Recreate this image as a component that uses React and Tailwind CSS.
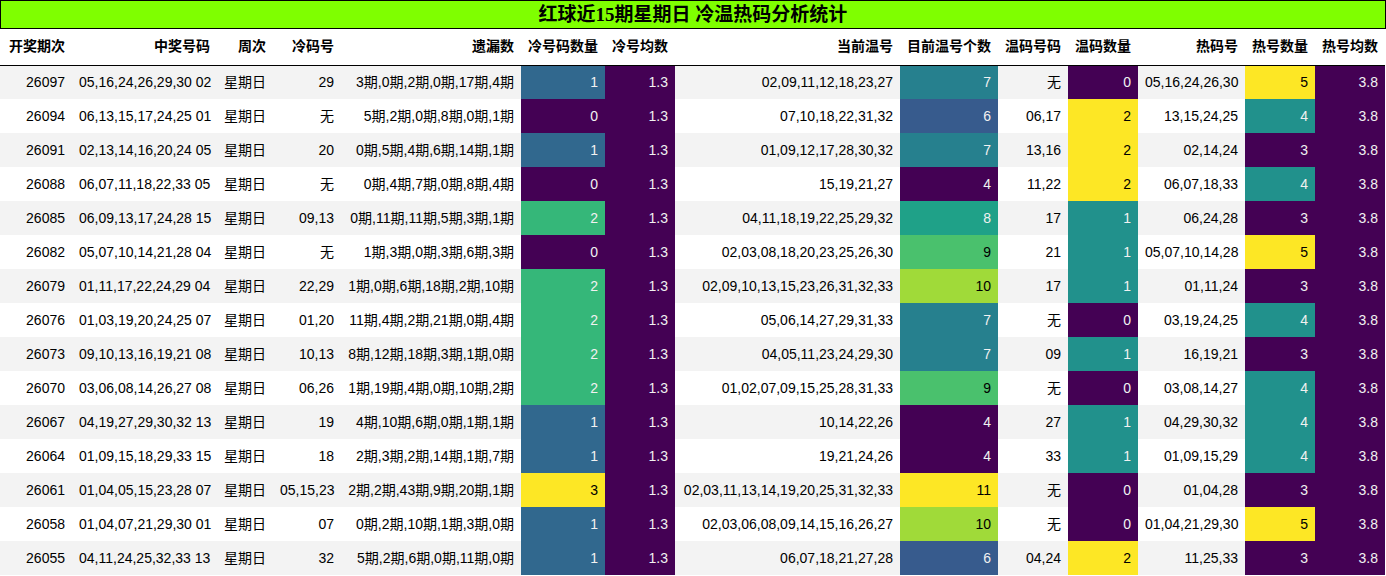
const rows = [
  ["26097", "05,16,24,26,29,30 02", "29", "3期,0期,2期,0期,17期,4期", 1, "02,09,11,12,18,23,27", 7, "无", 0, "05,16,24,26,30", 5],
  ["26094", "06,13,15,17,24,25 01", "无", "5期,2期,0期,8期,0期,1期", 0, "07,10,18,22,31,32", 6, "06,17", 2, "13,15,24,25", 4],
  ["26091", "02,13,14,16,20,24 05", "20", "0期,5期,4期,6期,14期,1期", 1, "01,09,12,17,28,30,32", 7, "13,16", 2, "02,14,24", 3],
  ["26088", "06,07,11,18,22,33 05", "无", "0期,4期,7期,0期,8期,4期", 0, "15,19,21,27", 4, "11,22", 2, "06,07,18,33", 4],
  ["26085", "06,09,13,17,24,28 15", "09,13", "0期,11期,11期,5期,3期,1期", 2, "04,11,18,19,22,25,29,32", 8, "17", 1, "06,24,28", 3],
  ["26082", "05,07,10,14,21,28 04", "无", "1期,3期,0期,3期,6期,3期", 0, "02,03,08,18,20,23,25,26,30", 9, "21", 1, "05,07,10,14,28", 5],
  ["26079", "01,11,17,22,24,29 04", "22,29", "1期,0期,6期,18期,2期,10期", 2, "02,09,10,13,15,23,26,31,32,33", 10, "17", 1, "01,11,24", 3],
  ["26076", "01,03,19,20,24,25 07", "01,20", "11期,4期,2期,21期,0期,4期", 2, "05,06,14,27,29,31,33", 7, "无", 0, "03,19,24,25", 4],
  ["26073", "09,10,13,16,19,21 08", "10,13", "8期,12期,18期,3期,1期,0期", 2, "04,05,11,23,24,29,30", 7, "09", 1, "16,19,21", 3],
  ["26070", "03,06,08,14,26,27 08", "06,26", "1期,19期,4期,0期,10期,2期", 2, "01,02,07,09,15,25,28,31,33", 9, "无", 0, "03,08,14,27", 4],
  ["26067", "04,19,27,29,30,32 13", "19", "4期,10期,6期,0期,1期,1期", 1, "10,14,22,26", 4, "27", 1, "04,29,30,32", 4],
  ["26064", "01,09,15,18,29,33 15", "18", "2期,3期,2期,14期,1期,7期", 1, "19,21,24,26", 4, "33", 1, "01,09,15,29", 4],
  ["26061", "01,04,05,15,23,28 07", "05,15,23", "2期,2期,43期,9期,20期,1期", 3, "02,03,11,13,14,19,20,25,31,32,33", 11, "无", 0, "01,04,28", 3],
  ["26058", "01,04,07,21,29,30 01", "07", "0期,2期,10期,1期,3期,0期", 1, "02,03,06,08,09,14,15,16,26,27", 10, "无", 0, "01,04,21,29,30", 5],
  ["26055", "04,11,24,25,32,33 13", "32", "5期,2期,6期,0期,11期,0期", 1, "06,07,18,21,27,28", 6, "04,24", 2, "11,25,33", 3],
];

const headers = [
  "开奖期次", "中奖号码", "周次", "冷码号", "遗漏数", "冷号码数量", "冷号均数",
  "当前温号", "目前温号个数", "温码号码", "温码数量", "热码号", "热号数量", "热号均数",
];

const widths = [72, 145, 56, 68, 180, 84, 70, 225, 98, 70, 70, 107, 70, 70];

// viridis steps per column
const coldColor = {
  0: "bg-[#440154] text-[#f1f1f1]",
  1: "bg-[#31688e] text-[#f1f1f1]",
  2: "bg-[#35b779] text-[#f1f1f1]",
  3: "bg-[#fde725] text-black",
};
const warmNowColor = {
  4: "bg-[#440154] text-[#f1f1f1]",
  6: "bg-[#375b8d] text-[#f1f1f1]",
  7: "bg-[#26808e] text-[#f1f1f1]",
  8: "bg-[#1fa188] text-[#f1f1f1]",
  9: "bg-[#4ac16d] text-black",
  10: "bg-[#a0da39] text-black",
  11: "bg-[#fde725] text-black",
};
const triColor = {
  0: "bg-[#440154] text-[#f1f1f1]",
  1: "bg-[#21918c] text-[#f1f1f1]",
  2: "bg-[#fde725] text-black",
};
const hotColor = {
  3: "bg-[#440154] text-[#f1f1f1]",
  4: "bg-[#21918c] text-[#f1f1f1]",
  5: "bg-[#fde725] text-black",
};
const purple = "bg-[#440154] text-[#f1f1f1]";

function Cell({ children, className = "" }) {
  return (
    <td className={`px-[7px] h-[34px] text-right whitespace-nowrap align-middle ${className}`}>
      {children}
    </td>
  );
}

export default function App() {
  return (
    <div
      className="w-[1386px] bg-white text-[14px] text-black"
      style={{ fontFamily: '"Liberation Sans", "Noto Sans CJK SC", sans-serif' }}
    >
      <div
        className="h-[29px] border border-black bg-[#7fff00] flex items-center justify-center font-bold text-[19px] leading-none"
        style={{ fontFamily: '"Liberation Serif", "Noto Sans CJK SC", serif' }}
      >
        红球近15期星期日 冷温热码分析统计
      </div>
      <table className="table-fixed border-collapse w-[1385px]">
        <colgroup>
          {widths.map((w, i) => (
            <col key={i} style={{ width: w }} />
          ))}
        </colgroup>
        <thead>
          <tr className="border-b border-black">
            {headers.map((h) => (
              <th key={h} className="px-[7px] h-[36px] text-right font-bold whitespace-nowrap">
                {h}
              </th>
            ))}
          </tr>
        </thead>
        <tbody>
          {rows.map((r, i) => (
            <tr key={r[0]} className={i % 2 === 0 ? "bg-[#f3f3f3]" : "bg-white"}>
              <Cell>{r[0]}</Cell>
              <Cell>{r[1]}</Cell>
              <Cell>星期日</Cell>
              <Cell>{r[2]}</Cell>
              <Cell>{r[3]}</Cell>
              <Cell className={coldColor[r[4]]}>{r[4]}</Cell>
              <Cell className={purple}>1.3</Cell>
              <Cell>{r[5]}</Cell>
              <Cell className={warmNowColor[r[6]]}>{r[6]}</Cell>
              <Cell>{r[7]}</Cell>
              <Cell className={triColor[r[8]]}>{r[8]}</Cell>
              <Cell>{r[9]}</Cell>
              <Cell className={hotColor[r[10]]}>{r[10]}</Cell>
              <Cell className={purple}>3.8</Cell>
            </tr>
          ))}
        </tbody>
      </table>
    </div>
  );
}
